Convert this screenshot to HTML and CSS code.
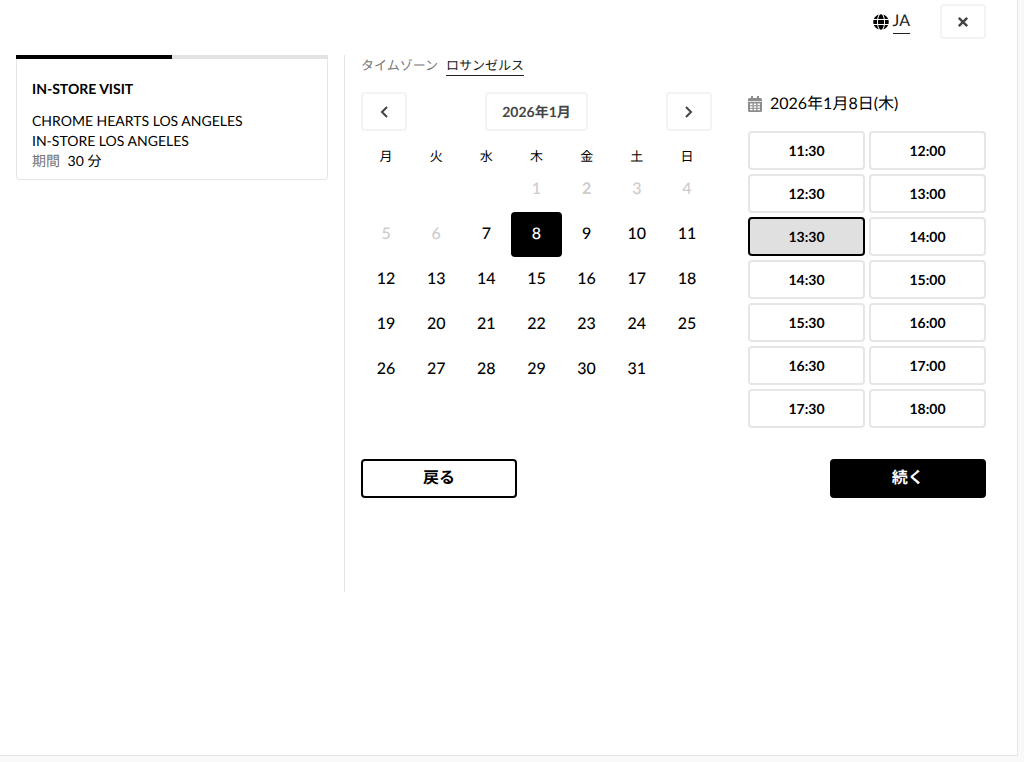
FILE: index.html
```html
<!DOCTYPE html>
<html lang="ja">
<head>
    <meta charset="UTF-8">
    <meta name="viewport" content="width=device-width, initial-scale=1.0">
    <title>IN-STORE VISIT</title>
    <link rel="stylesheet" href="styles.css">
</head>
<body>
    <div class="panel">
        <!-- Top bar -->
        <header class="topbar">
            <div class="language">
                <svg class="globe" viewBox="0 0 496 512" aria-hidden="true"><path d="M336.500 160C322 70.700 287.800 8 248 8s-74 62.700-88.500 152h177zM152 256c0 22.200 1.200 43.500 3.300 64h185.300c2.100-20.500 3.300-41.800 3.300-64s-1.200-43.500-3.300-64H155.300c-2.100 20.500-3.300 41.800-3.300 64zm324.700-96c-28.600-67.900-86.500-120.400-158-141.600 24.400 33.800 41.200 84.700 50 141.600h108zM177.200 18.400C105.800 39.600 47.800 92.100 19.300 160h108c8.700-56.900 25.500-107.800 49.900-141.600zM487.400 192H372.700c2.100 21 3.300 42.500 3.300 64s-1.200 43-3.300 64h114.600c5.500-20.500 8.600-41.800 8.600-64s-3.100-43.500-8.500-64zM120 256c0-21.500 1.200-43 3.300-64H8.600C3.200 212.500 0 233.800 0 256s3.200 43.500 8.600 64h114.600c-2-21-3.200-42.500-3.200-64zm39.500 96c14.500 89.300 48.700 152 88.500 152s74-62.700 88.500-152h-177zm159.300 141.600c71.400-21.200 129.400-73.700 158-141.600h-108c-8.800 56.900-25.600 107.800-50 141.600zM19.300 352c28.600 67.900 86.500 120.400 158 141.600-24.400-33.800-41.200-84.700-50-141.600h-108z"/></svg>
                <a class="language-link" href="#">JA</a>
            </div>
            <button class="btn-light btn-close" type="button" aria-label="閉じる">
                <svg viewBox="0 0 10 10" aria-hidden="true"><path d="M1.500 1.500 8.500 8.500M8.500 1.500 1.500 8.500"/></svg>
            </button>
        </header>

        <main class="layout">
            <!-- Visit summary -->
            <aside class="summary">
                <div class="progress"><div class="progress-bar" style="width: 50%"></div></div>
                <h1 class="summary-title">IN-STORE VISIT</h1>
                <p>CHROME HEARTS LOS ANGELES</p>
                <p>IN-STORE LOS ANGELES</p>
                <p><span class="muted">期間</span> 30 分</p>
            </aside>

            <section class="booking">
                <div class="timezone">
                    <span class="muted">タイムゾーン</span>
                    <a class="timezone-link" href="#">ロサンゼルス</a>
                </div>

                <div class="picker">
                    <!-- Calendar -->
                    <div class="calendar">
                        <div class="calendar-nav">
                            <button class="btn-light btn-arrow" type="button" aria-label="前の月">
                                <svg viewBox="0 0 10 14" aria-hidden="true"><path d="M8 2 3 7l5 5"/></svg>
                            </button>
                            <button class="btn-light btn-month" type="button">2026年1月</button>
                            <button class="btn-light btn-arrow" type="button" aria-label="次の月">
                                <svg viewBox="0 0 10 14" aria-hidden="true"><path d="M2 2l5 5-5 5"/></svg>
                            </button>
                        </div>
                        <table class="days">
                            <thead>
                                <tr><th>月</th><th>火</th><th>水</th><th>木</th><th>金</th><th>土</th><th>日</th></tr>
                            </thead>
                            <tbody>
                                <tr>
                                    <td></td><td></td><td></td>
                                    <td><button class="day" disabled>1</button></td>
                                    <td><button class="day today" disabled>2</button></td>
                                    <td><button class="day" disabled>3</button></td>
                                    <td><button class="day" disabled>4</button></td>
                                </tr>
                                <tr>
                                    <td><button class="day" disabled>5</button></td>
                                    <td><button class="day" disabled>6</button></td>
                                    <td><button class="day">7</button></td>
                                    <td><button class="day selected">8</button></td>
                                    <td><button class="day">9</button></td>
                                    <td><button class="day">10</button></td>
                                    <td><button class="day">11</button></td>
                                </tr>
                                <tr>
                                    <td><button class="day">12</button></td>
                                    <td><button class="day">13</button></td>
                                    <td><button class="day">14</button></td>
                                    <td><button class="day">15</button></td>
                                    <td><button class="day">16</button></td>
                                    <td><button class="day">17</button></td>
                                    <td><button class="day">18</button></td>
                                </tr>
                                <tr>
                                    <td><button class="day">19</button></td>
                                    <td><button class="day">20</button></td>
                                    <td><button class="day">21</button></td>
                                    <td><button class="day">22</button></td>
                                    <td><button class="day">23</button></td>
                                    <td><button class="day">24</button></td>
                                    <td><button class="day">25</button></td>
                                </tr>
                                <tr>
                                    <td><button class="day">26</button></td>
                                    <td><button class="day">27</button></td>
                                    <td><button class="day">28</button></td>
                                    <td><button class="day">29</button></td>
                                    <td><button class="day">30</button></td>
                                    <td><button class="day">31</button></td>
                                    <td></td>
                                </tr>
                            </tbody>
                        </table>
                    </div>

                    <!-- Time slots -->
                    <div class="times">
                        <h2 class="times-date">
                            <svg viewBox="0 0 14 16" aria-hidden="true"><path fill-rule="evenodd" d="M3 0h2v2h4V0h2v2h1.500A1.500 1.500 0 0 1 14 3.500V5H0V3.500A1.500 1.500 0 0 1 1.500 2H3zM0 5.800h14v8.700a1.500 1.500 0 0 1-1.500 1.500h-11A1.500 1.500 0 0 1 0 14.500zM2 7.500v1.700h2.500V7.500zm3.700 0v1.700h2.600V7.500zm3.800 0v1.700H12V7.500zM2 10.200v1.600h2.500v-1.600zm3.700 0v1.600h2.600v-1.600zm3.800 0v1.600H12v-1.600zM2 12.800v1.500h2.500v-1.500zm3.700 0v1.500h2.600v-1.500zm3.800 0v1.500H12v-1.500z"/></svg>
                            2026年1月8日(木)
                        </h2>
                        <div class="slots">
                            <button class="slot">11:30</button>
                            <button class="slot">12:00</button>
                            <button class="slot">12:30</button>
                            <button class="slot">13:00</button>
                            <button class="slot active">13:30</button>
                            <button class="slot">14:00</button>
                            <button class="slot">14:30</button>
                            <button class="slot">15:00</button>
                            <button class="slot">15:30</button>
                            <button class="slot">16:00</button>
                            <button class="slot">16:30</button>
                            <button class="slot">17:00</button>
                            <button class="slot">17:30</button>
                            <button class="slot">18:00</button>
                        </div>
                    </div>
                </div>

                <div class="actions">
                    <button class="btn-action" type="button">戻る</button>
                    <button class="btn-action primary" type="button">続く</button>
                </div>
            </section>
        </main>
    </div>
</body>
</html>
```

FILE: styles.css
```css
* {
    box-sizing: border-box;
}

body {
    margin: 0;
    background: #f9f9f9;
    color: #000;
    font-family: Lato, "Noto Sans CJK JP", sans-serif;
    font-size: 14px;
    line-height: 20px;
    text-rendering: geometricPrecision;
}

button {
    padding: 0;
    border: 0;
    background: none;
    color: inherit;
    font: inherit;
    text-rendering: inherit;
    cursor: pointer;
}

a {
    color: #222;
    text-decoration: none;
    border-bottom: 1px solid #222;
}

h1,
h2,
p {
    margin: 0;
}

.muted {
    color: #767676;
}

.panel {
    min-height: calc(100vh - 6px);
    margin-right: 6px;
    padding: 4px 31px 0 16px;
    background: #fff;
    border: solid #e6e6e6;
    border-width: 0 1px 1px 0;
}

/* Top bar */
.topbar {
    display: flex;
    justify-content: flex-end;
    align-items: center;
    gap: 30px;
}

.language {
    display: flex;
    align-items: center;
    gap: 4px;
    font-size: 16px;
}

.language-link {
    line-height: 24px;
}

.globe {
    width: 16px;
    height: 16px;
}

.btn-light {
    border: 2px solid #f3f3f3;
    border-radius: 4px;
    color: #444;
}

.btn-light svg {
    display: block;
    margin: 0 auto;
    fill: none;
    stroke: #444;
    stroke-width: 2;
}

.btn-close {
    width: 46px;
    height: 35px;
}

.btn-close svg {
    width: 12px;
    height: 12px;
}

/* Columns */
.layout {
    display: grid;
    grid-template-columns: 312fr 642fr;
    gap: 16px;
    align-items: start;
    margin-top: 16px;
}

.summary {
    padding-bottom: 8px;
    border: 1px solid #e6e6e6;
    border-top: 0;
    border-radius: 0 0 4px 4px;
}

.summary-title,
.summary p {
    padding: 0 15px;
    font-size: 14px;
}

.summary-title {
    margin: 20px 0 12px;
    font-weight: 700;
}

.summary .muted {
    margin-right: 4px;
}

.progress {
    height: 4px;
    margin: 0 -1px;
    background: #e3e3e3;
}

.progress-bar {
    height: 100%;
    background: #000;
}

.booking {
    min-height: 537px;
    padding-left: 16px;
    border-left: 1px solid #e6e6e6;
}

.timezone {
    display: flex;
    gap: 8px;
    font-size: 13px;
}

.picker {
    display: grid;
    grid-template-columns: 351fr 238fr;
    gap: 36px;
    margin-top: 16px;
}

/* Calendar */
.calendar-nav {
    display: flex;
    justify-content: space-between;
}

.btn-arrow,
.btn-month {
    height: 39px;
}

.btn-arrow {
    width: 46px;
}

.btn-arrow svg {
    width: 10px;
    height: 14px;
}

.btn-month {
    padding: 0 15px;
    font-weight: 700;
}

.days {
    width: 100%;
    margin-top: 15px;
    border-collapse: collapse;
    table-layout: fixed;
}

.days th,
.days td {
    padding: 0;
    text-align: center;
}

.days th {
    height: 21px;
    font-size: 13px;
    font-weight: 400;
    vertical-align: top;
}

.days td {
    height: 45px;
}

.day {
    display: block;
    width: 100%;
    height: 45px;
    padding-bottom: 2px;
    border-radius: 4px;
    font-size: 16px;
    font-weight: 500;
}

.day:disabled {
    color: #ccc;
    cursor: default;
}

.day.today {
    font-weight: 700;
}

.day.selected {
    background: #000;
    color: #fff;
}

/* Time slots */
.times-date {
    display: flex;
    align-items: center;
    gap: 8px;
    height: 24px;
    font-size: 16px;
    font-weight: 400;
}

.times-date svg {
    width: 14px;
    height: 16px;
    fill: #8c8c8c;
}

.slots {
    display: grid;
    grid-template-columns: 1fr 1fr;
    gap: 4px;
    margin-top: 15px;
}

.slot {
    height: 39px;
    border: 2px solid #e6e6e6;
    border-radius: 4px;
    font-weight: 700;
}

.slot.active {
    border-color: #000;
    background: #e0e0e0;
}

/* Footer buttons */
.actions {
    display: flex;
    justify-content: space-between;
    margin-top: 31px;
}

.btn-action {
    width: 25%;
    height: 39px;
    padding-bottom: 2px;
    border: 2px solid #000;
    border-radius: 4px;
    font-size: 16px;
    font-weight: 700;
}

.btn-action.primary {
    background: #000;
    color: #fff;
}
```
